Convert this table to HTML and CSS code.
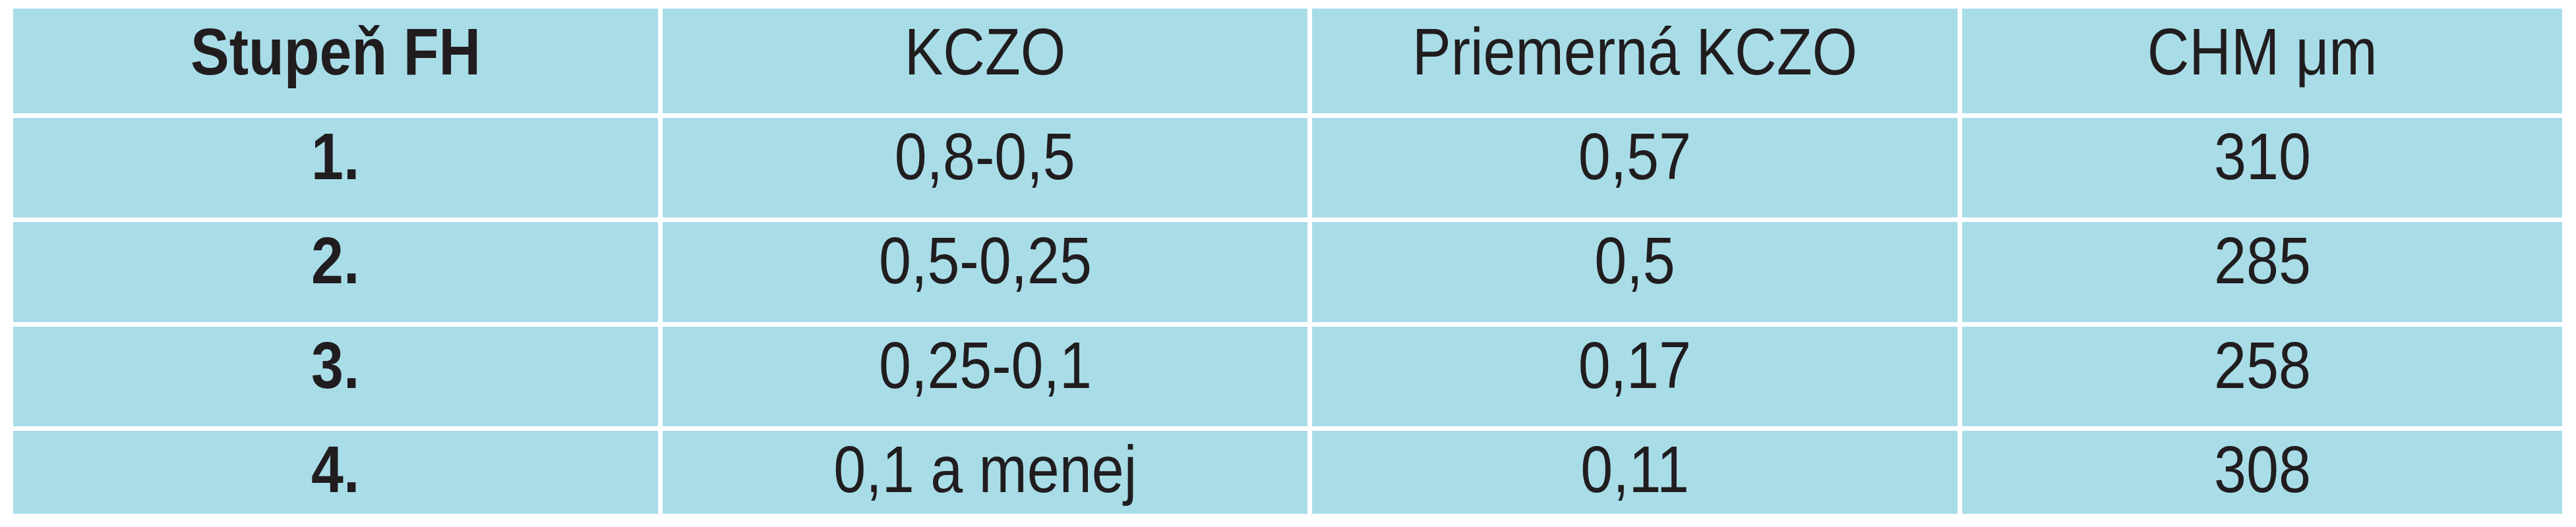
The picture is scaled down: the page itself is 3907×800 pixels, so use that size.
FILE: index.html
```html
<!DOCTYPE html>
<html lang="sk">
<head>
<meta charset="utf-8">
<title>Stupeň FH</title>
<link rel="stylesheet" href="styles.css">
</head>
<body>
<div class="table">
  <div class="cell head first"><span class="txt">Stupeň FH</span></div>
  <div class="cell head"><span class="txt">KCZO</span></div>
  <div class="cell head"><span class="txt">Priemerná KCZO</span></div>
  <div class="cell head"><span class="txt">CHM μm</span></div>

  <div class="cell first"><span class="txt">1.</span></div>
  <div class="cell"><span class="txt">0,8-0,5</span></div>
  <div class="cell"><span class="txt">0,57</span></div>
  <div class="cell"><span class="txt">310</span></div>

  <div class="cell first"><span class="txt">2.</span></div>
  <div class="cell"><span class="txt">0,5-0,25</span></div>
  <div class="cell"><span class="txt">0,5</span></div>
  <div class="cell"><span class="txt">285</span></div>

  <div class="cell first"><span class="txt">3.</span></div>
  <div class="cell"><span class="txt">0,25-0,1</span></div>
  <div class="cell"><span class="txt">0,17</span></div>
  <div class="cell"><span class="txt">258</span></div>

  <div class="cell first"><span class="txt">4.</span></div>
  <div class="cell"><span class="txt">0,1 a menej</span></div>
  <div class="cell"><span class="txt">0,11</span></div>
  <div class="cell"><span class="txt">308</span></div>
</div>
</body>
</html>
```

FILE: styles.css
```css
html, body {
  margin: 0;
  padding: 0;
  background: #ffffff;
}

body {
  padding: 13px 0 0 20px;
  font-family: "Liberation Sans", Arial, sans-serif;
  color: #211d1f;
}

.table {
  display: grid;
  grid-template-columns: 978px 978px 979px 910px;
  grid-template-rows: 159px 151px 152px 151px 126px;
  column-gap: 7px;
  row-gap: 7px;
  width: 3866px;
}

.cell {
  background: #a8dde8;
  text-align: center;
  font-size: 100px;
  line-height: 100px;
  padding-top: 8px;
  box-sizing: border-box;
}

.cell.head {
  padding-top: 15px;
}

.cell.first {
  font-weight: 700;
}

.txt {
  display: inline-block;
  margin-top: -6px;
  transform: scaleX(0.88);
  transform-origin: center;
  white-space: nowrap;
}
```
